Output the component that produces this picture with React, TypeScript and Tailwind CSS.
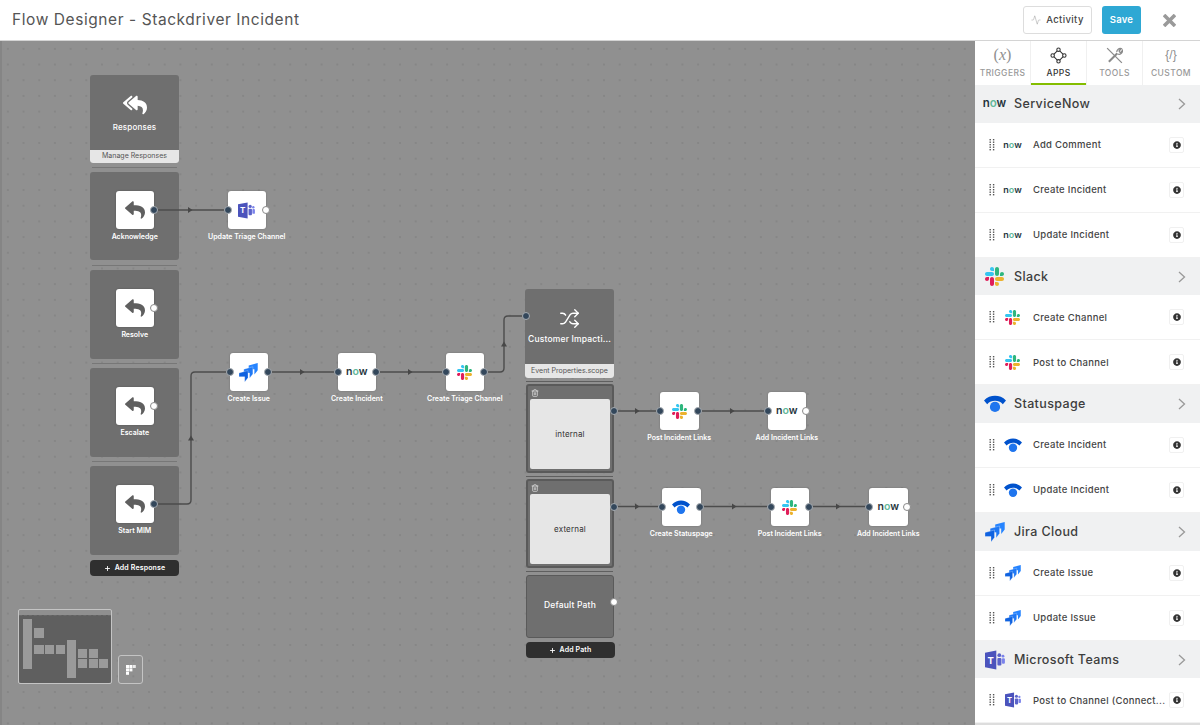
import React from "react";
import { Activity, Shuffle, Trash2, Plus } from "lucide-react";
import { FaReply, FaReplyAll, FaInfoCircle } from "react-icons/fa";

type IconKind = "now" | "slack" | "status" | "jira" | "teams";

function SlackLogo({ size }: { size: number }) {
  return (
    <svg width={size} height={size} viewBox="0 0 122.8 122.8">
      <path d="M25.8 77.6c0 7.1-5.8 12.9-12.9 12.9S0 84.7 0 77.6s5.8-12.9 12.9-12.9h12.9v12.9z" fill="#e01e5a" />
      <path d="M32.3 77.6c0-7.1 5.8-12.9 12.9-12.9s12.9 5.8 12.9 12.9v32.3c0 7.1-5.8 12.9-12.9 12.9s-12.9-5.8-12.9-12.9V77.6z" fill="#e01e5a" />
      <path d="M45.2 25.8c-7.1 0-12.9-5.8-12.9-12.9S38.1 0 45.2 0s12.9 5.8 12.9 12.9v12.9H45.2z" fill="#36c5f0" />
      <path d="M45.2 32.3c7.1 0 12.9 5.8 12.9 12.9s-5.8 12.9-12.9 12.9H12.9C5.8 58.1 0 52.3 0 45.2s5.8-12.9 12.9-12.9h32.3z" fill="#36c5f0" />
      <path d="M97 45.2c0-7.1 5.8-12.9 12.9-12.9s12.9 5.8 12.9 12.9-5.8 12.9-12.9 12.9H97V45.2z" fill="#2eb67d" />
      <path d="M90.5 45.2c0 7.1-5.8 12.9-12.9 12.9s-12.9-5.8-12.9-12.9V12.9C64.7 5.8 70.5 0 77.6 0s12.9 5.8 12.9 12.9v32.3z" fill="#2eb67d" />
      <path d="M77.6 97c7.1 0 12.9 5.8 12.9 12.9s-5.8 12.9-12.9 12.9-12.9-5.8-12.9-12.9V97h12.9z" fill="#ecb22e" />
      <path d="M77.6 90.5c-7.1 0-12.9-5.8-12.9-12.9s5.8-12.9 12.9-12.9h32.3c7.1 0 12.9 5.8 12.9 12.9s-5.8 12.9-12.9 12.9H77.6z" fill="#ecb22e" />
    </svg>
  );
}

function StatusLogo({ size }: { size: number }) {
  return (
    <svg width={size} height={size * 0.8} viewBox="0 0 25 20">
      <path d="M0 6.2C3.5 2.4 8 .8 12.5.8S21.5 2.4 25 6.2l-3.6 4.2C18.8 7.8 15.8 6.6 12.5 6.6S6.200 7.800 3.600 10.400z" fill="#0052cc" />
      <circle cx="12.5" cy="13.6" r="5.800" fill="#1f75ee" />
    </svg>
  );
}

function JiraLogo({ size }: { size: number }) {
  const shape = "M0 3 L9.500 .5 V8 L6 12.500 V7 H0 Z";
  return (
    <svg width={size} height={size} viewBox="0 0 20 20">
      <path d={shape} transform="translate(10.200 -.5)" fill="#2684ff" />
      <path d={shape} transform="translate(5.100 3.500)" fill="#1f78f4" stroke="#ffffff" strokeWidth="0.300" />
      <path d={shape} transform="translate(0 7.500)" fill="#0f62e0" stroke="#ffffff" strokeWidth="0.300" />
    </svg>
  );
}

function TeamsLogo({ size }: { size: number }) {
  return (
    <svg width={size} height={size} viewBox="0 0 20 20">
      <circle cx="14.300" cy="5.200" r="1.900" fill="#5b63c9" />
      <circle cx="18" cy="6.200" r="1.400" fill="#7b83eb" />
      <rect x="12.400" y="8" width="4" height="7.500" rx="1" fill="#5b63c9" />
      <rect x="16.900" y="8.300" width="3" height="5.500" rx="1" fill="#7b83eb" />
      <path d="M0 2.700L11.300 .6V19.400L0 17.300Z" fill="#4b53bc" />
      <text x="5.600" y="13.500" textAnchor="middle" fontSize="9.500" fontWeight="700" fill="#fff" fontFamily="Inter, sans-serif">T</text>
    </svg>
  );
}

function NowLogo({ className }: { className: string }) {
  return (
    <span className={`font-['Inter',sans-serif] font-semibold leading-none text-[#26353d] ${className}`}>
      n<span className="text-[#62b89a]">o</span>w
    </span>
  );
}

function AppIcon({ kind, size, nowClass }: { kind: IconKind; size: number; nowClass: string }) {
  if (kind === "now") return <NowLogo className={nowClass} />;
  if (kind === "slack") return <SlackLogo size={size} />;
  if (kind === "status") return <StatusLogo size={size + 3} />;
  if (kind === "jira") return <JiraLogo size={size + 1} />;
  return <TeamsLogo size={size + 1} />;
}

function Port({ x, y, open }: { x: number; y: number; open?: boolean }) {
  return (
    <span
      className={
        open
          ? "absolute z-20 h-[8px] w-[8px] -translate-x-1/2 -translate-y-1/2 rounded-full border border-[#8a8a8a] bg-white"
          : "absolute z-20 h-[8px] w-[8px] -translate-x-1/2 -translate-y-1/2 rounded-full border-[1.5px] border-[#a8adb2] bg-[#33475b]"
      }
      style={{ left: x, top: y }}
    />
  );
}

function NodeLabel({ cx, y, text }: { cx: number; y: number; text: string }) {
  return (
    <span
      className="absolute -translate-x-1/2 whitespace-nowrap text-[7px] font-semibold leading-[9px] text-white"
      style={{ left: cx, top: y }}
    >
      {text}
    </span>
  );
}

function FlowNode({ x, y, label, children }: { x: number; y: number; label: string; children: React.ReactNode }) {
  return (
    <>
      <div
        className="absolute z-10 flex h-[38px] w-[38.500px] items-center justify-center rounded-[3px] bg-white shadow-[0_0_2px_rgba(0,0,0,0.25)]"
        style={{ left: x, top: y }}
      >
        {children}
      </div>
      <NodeLabel cx={x + 19.25} y={y + 41} text={label} />
    </>
  );
}

function Panel({ y, h }: { y: number; h: number }) {
  return <div className="absolute left-[90px] w-[89px] rounded-[3px] bg-[#6f6f6f]" style={{ top: y, height: h }} />;
}

function Sep({ x, y }: { x: number; y: number }) {
  return <div className="absolute h-px w-[85px] bg-[#777777]" style={{ left: x, top: y }} />;
}

const reply = <FaReply size={20} color="#5f5f5f" />;
const nowNode = <NowLogo className="text-[10.500px]" />;
const slackNode = <SlackLogo size={15} />;
const statusNode = <StatusLogo size={18} />;

function Arrow({ x, y, up }: { x: number; y: number; up?: boolean }) {
  const pts = up ? `${x - 3},${y + 2.5} ${x + 3},${y + 2.5} ${x},${y - 2.5}` : `${x - 2},${y - 3} ${x - 2},${y + 3} ${x + 2.5},${y}`;
  return <polygon points={pts} fill="#474747" />;
}

function Edges() {
  const lines = [
    "M154 210H228",
    "M154 504H187Q191 504 191 500V376Q191 372 195 372H230",
    "M267 372H338",
    "M375 372H446",
    "M483 372H500Q504 372 504 368V320Q504 316 508 316H525",
    "M614 411H660",
    "M698 411H767",
    "M614 506.500H662",
    "M700 506.500H771",
    "M808 506.500H869",
  ];
  return (
    <svg className="absolute left-0 top-0 z-[5]" width="975" height="684" viewBox="0 41 975 684">
      {lines.map((d) => (
        <path key={d} d={d} fill="none" stroke="#4c4c4c" strokeWidth="1.400" />
      ))}
      <Arrow x={190} y={210} />
      <Arrow x={191} y={438} up />
      <Arrow x={302} y={372} />
      <Arrow x={410} y={372} />
      <Arrow x={504} y={344} up />
      <Arrow x={637} y={411} />
      <Arrow x={732} y={411} />
      <Arrow x={637} y={506.5} />
      <Arrow x={734} y={506.5} />
      <Arrow x={838} y={506.5} />
    </svg>
  );
}

function BranchFrame({ y, label }: { y: number; label: string }) {
  return (
    <div
      className="absolute left-[526px] flex h-[89px] w-[88px] flex-col rounded-[3px] border-2 border-[#5a5a5a] bg-[#6f6f6f] px-[2px] pb-[2px]"
      style={{ top: y }}
    >
      <div className="flex h-[13px] items-center pl-[1px]">
        <Trash2 size={8} color="#e8e8e8" />
      </div>
      <div className="flex flex-1 items-center justify-center rounded-[2px] bg-[#e6e6e6] text-[8px] tracking-[0.02em] text-[#333333]">
        {label}
      </div>
    </div>
  );
}

function Canvas() {
  const y0 = 41;
  const blocks: [number, number][] = [
    [368 - y0, 89],
    [466 - y0, 89],
    [172 - y0, 88],
    [270 - y0, 89],
  ];
  return (
    <div className="relative h-[684px] w-[975px] shrink-0 overflow-hidden border-l-2 border-[#858585] bg-[#909090] bg-[radial-gradient(circle,#747474_0.5px,transparent_0.8px)] bg-[length:15.7px_15.7px] bg-[position:-2px_0px]">
      <div className="absolute -left-[2px] top-0 h-[684px] w-[975px]">
        <Edges />

        <div className="absolute left-[90px] top-[34px] flex h-[88px] w-[89px] flex-col overflow-hidden rounded-[3px] bg-[#6f6f6f]">
          <div className="flex flex-1 flex-col items-center gap-[5px] pt-[18px] text-[8px] font-medium tracking-[0.02em] text-white">
            <FaReplyAll size={24} color="#ffffff" />
            <span className="leading-[10px]">Responses</span>
          </div>
          <div className="flex h-[13px] items-center justify-center bg-[#e6e6e6] text-[7px] text-[#555555]">
            Manage Responses
          </div>
        </div>
        <Sep x={92} y={126} />
        <Sep x={92} y={224} />
        <Sep x={92} y={322} />
        <Sep x={92} y={420} />

        {blocks.map(([y, h]) => (
          <Panel key={y} y={y} h={h} />
        ))}

        <FlowNode x={115.5} y={150} label="Acknowledge">{reply}</FlowNode>
        <FlowNode x={115.5} y={248} label="Resolve">{reply}</FlowNode>
        <FlowNode x={115.5} y={345.500} label="Escalate">{reply}</FlowNode>
        <FlowNode x={115.5} y={443.500} label="Start MIM">{reply}</FlowNode>
        <FlowNode x={227.5} y={150} label="Update Triage Channel"><TeamsLogo size={17} /></FlowNode>
        <FlowNode x={229.5} y={312} label="Create Issue"><JiraLogo size={19} /></FlowNode>
        <FlowNode x={337.5} y={312} label="Create Incident">{nowNode}</FlowNode>
        <FlowNode x={445.5} y={312} label="Create Triage Channel">{slackNode}</FlowNode>

        <Port x={154} y={169} />
        <Port x={228} y={169} />
        <Port x={265.5} y={169} open />
        <Port x={154} y={267} open />
        <Port x={154} y={364.500} open />
        <Port x={154} y={463} />
        <Port x={230} y={331} />
        <Port x={267.5} y={331} />
        <Port x={338} y={331} />
        <Port x={375.5} y={331} />
        <Port x={446} y={331} />
        <Port x={483.5} y={331} />

        <button className="absolute left-[90px] top-[519px] flex h-[16px] w-[89px] items-center justify-center gap-[4px] rounded-[4px] bg-[#2f2f2f] text-[7px] font-semibold tracking-[0.02em] text-white">
          <Plus size={7} strokeWidth={3} />
          Add Response
        </button>

        <div className="absolute left-[525px] top-[248px] flex h-[89px] w-[89px] flex-col overflow-hidden rounded-[3px] bg-[#6f6f6f]">
          <div className="flex flex-1 flex-col items-center gap-[5px] pt-[19px] text-[8.500px] font-medium tracking-[0.02em] text-white">
            <Shuffle size={21} strokeWidth={1.6} />
            <span className="leading-[10px]">Customer Impacti...</span>
          </div>
          <div className="flex h-[14px] items-center justify-center bg-[#e6e6e6] text-[7px] text-[#555555]">
            Event Properties.scope
          </div>
        </div>
        <Port x={525.5} y={275} />
        <div className="absolute left-[526px] top-[339.500px] h-px w-[87px] bg-[#5f5f5f]" />
        <BranchFrame y={343} label="internal" />
        <div className="absolute left-[526px] top-[434.500px] h-px w-[87px] bg-[#5f5f5f]" />
        <BranchFrame y={438} label="external" />
        <div className="absolute left-[526px] top-[530px] h-px w-[87px] bg-[#5f5f5f]" />
        <div className="absolute left-[526px] top-[534px] flex h-[63px] w-[88px] items-center justify-center rounded-[3px] border border-[#5a5a5a] bg-[#6f6f6f] pb-[3px] text-[8.500px] font-medium tracking-[0.02em] text-white">
          Default Path
        </div>
        <button className="absolute left-[525.500px] top-[601px] flex h-[16px] w-[89px] items-center justify-center gap-[4px] rounded-[4px] bg-[#2f2f2f] text-[7px] font-semibold tracking-[0.02em] text-white">
          <Plus size={7} strokeWidth={3} />
          Add Path
        </button>
        <Port x={614} y={370} />
        <Port x={614} y={465.500} />
        <Port x={614} y={561} open />

        <FlowNode x={660} y={351} label="Post Incident Links">{slackNode}</FlowNode>
        <FlowNode x={767.5} y={351} label="Add Incident Links">{nowNode}</FlowNode>
        <FlowNode x={662} y={447} label="Create Statuspage">{statusNode}</FlowNode>
        <FlowNode x={770.5} y={447} label="Post Incident Links">{slackNode}</FlowNode>
        <FlowNode x={869} y={447} label="Add Incident Links">{nowNode}</FlowNode>
        <Port x={660} y={370} />
        <Port x={698} y={370} />
        <Port x={767.5} y={370} />
        <Port x={805.5} y={370} open />
        <Port x={662} y={465.500} />
        <Port x={699.5} y={465.500} />
        <Port x={771} y={465.500} />
        <Port x={808.5} y={465.500} />
        <Port x={869} y={465.500} />
        <Port x={906.5} y={465.500} open />

        <div className="absolute left-[18px] top-[568px] h-[75px] w-[94px] rounded-[2px] border border-[#c4c4c4] bg-[#8f8f8f]">
          <div className="absolute inset-x-0 bottom-0 top-[5px] rounded-b-[2px] border-t border-dashed border-[#6a6a6a] bg-[#5f5f5f]" />
          {[
            [4, 9, 9, 50],
            [15, 18, 10, 10],
            [15, 35, 10, 9],
            [26, 35, 9, 9],
            [37, 35, 9, 9],
            [48, 30, 9, 38],
            [59, 39, 9, 9],
            [70, 39, 9, 9],
            [59, 49, 9, 9],
            [70, 49, 9, 9],
            [80, 49, 9, 9],
          ].map(([x, y, w, h]) => (
            <div key={`${x}-${y}`} className="absolute bg-[#9a9a9a]" style={{ left: x, top: y, width: w, height: h }} />
          ))}
        </div>
        <button className="absolute left-[118px] top-[614px] flex h-[29px] w-[25px] items-center justify-center rounded-[3px] border border-[#c4c4c4]">
          <svg width="10" height="10" viewBox="0 0 10 10" fill="#ffffff">
            <rect x="0" y="0" width="3" height="3" />
            <rect x="3.400" y="0" width="3" height="3" />
            <rect x="6.800" y="0" width="3" height="3" opacity="0.8" />
            <rect x="0" y="3.400" width="3" height="3" />
            <rect x="3.400" y="3.400" width="3" height="3" />
            <rect x="0" y="6.800" width="3" height="3" />
          </svg>
        </button>
      </div>
    </div>
  );
}

function Handle() {
  const dots = [0, 2.5, 5, 7.5, 10];
  return (
    <svg width="6" height="12" viewBox="0 0 6 12" fill="#555555">
      {dots.map((y) => (
        <g key={y}>
          <rect x="0.500" y={y} width="1.400" height="1.400" />
          <rect x="3.900" y={y} width="1.400" height="1.400" />
        </g>
      ))}
    </svg>
  );
}

function Row({ kind, text }: { kind: IconKind; text: string }) {
  return (
    <div className="flex h-[45px] items-center border-b border-[#f1f1f1] bg-white">
      <div className="ml-[14px] flex w-[6px] justify-center">
        <Handle />
      </div>
      <div className="ml-[8px] flex w-[25px] items-center justify-center pr-[6px]">
        <AppIcon kind={kind} size={15} nowClass="text-[9px]" />
      </div>
      <span className="ml-[5px] w-[130px] whitespace-nowrap pt-[1px] text-[9.500px] font-medium tracking-[0.03em] text-[#444444]">{text}</span>
      <span className="ml-[6px] flex h-[16px] w-[15px] items-center justify-center rounded-[2px] border border-[#f0f0f0]">
        <FaInfoCircle size={8} color="#333333" />
      </span>
    </div>
  );
}

function SectionHeader({ kind, text }: { kind: IconKind; text: string }) {
  return (
    <div className="flex h-[37.700px] items-center bg-[#f0f1f2]">
      <div className="flex w-[39px] items-center justify-center">
        <AppIcon kind={kind} size={19} nowClass="text-[11.500px]" />
      </div>
      <span className="pt-[1px] text-[12.500px] font-medium tracking-[0.03em] text-[#3d3d3d]">{text}</span>
      <svg className="ml-auto mr-[14px]" width="8" height="12" viewBox="0 0 8 12" fill="none" stroke="#999999" strokeWidth="1.300">
        <polyline points="1,1 6.500,6 1,11" />
      </svg>
    </div>
  );
}

function Tab({ label, active, children }: { label: string; active?: boolean; children: React.ReactNode }) {
  return (
    <div
      className={
        active
          ? "relative flex h-[44px] w-[56px] flex-col items-center pt-[3px] text-[#333333]"
          : "relative flex h-[44px] w-[56px] flex-col items-center pt-[3px] text-[#999999]"
      }
    >
      <div className="flex h-[22px] items-center justify-center">{children}</div>
      <span className="mt-[2px] text-[8.500px] font-medium leading-[11px] tracking-[0.05em]">{label}</span>
      {active && <span className="absolute inset-x-0 bottom-0 h-[2px] bg-[#84bd00]" />}
    </div>
  );
}

function Sidebar() {
  return (
    <aside className="flex h-[684px] w-[225px] shrink-0 flex-col overflow-hidden bg-[#dddddd]">
      <div className="flex h-[44px] shrink-0 divide-x divide-[#f0f0f0] bg-white">
        <Tab label="TRIGGERS">
          <span className="font-['Liberation_Serif',serif] text-[16px] leading-none text-[#8f8f8f]">
            (<i>x</i>)
          </span>
        </Tab>
        <Tab label="APPS" active>
          <svg width="17" height="17" viewBox="0 0 16 16" fill="#fff" stroke="#333333" strokeWidth="1">
            <path d="M8 2.500L2.500 8L8 13.500L13.500 8Z" fill="none" />
            <circle cx="8" cy="2.500" r="1.600" />
            <circle cx="2.500" cy="8" r="1.600" />
            <circle cx="13.500" cy="8" r="1.600" />
            <circle cx="8" cy="13.500" r="1.600" />
          </svg>
        </Tab>
        <Tab label="TOOLS">
          <svg width="17" height="17" viewBox="0 0 15 15" fill="none" stroke="#8a8a8a" strokeWidth="1.100">
            <path d="M1 1L14 14" />
            <path d="M2.500 13L10 5.500" strokeWidth="1.800" />
            <path d="M9.500 4.500C9.500 2.500 11.500 .8 13.500 1.500L11.500 3.500L12 4.500L13 5L14.500 3C14.800 5.300 12.500 7 10.500 6.200" />
          </svg>
        </Tab>
        <Tab label="CUSTOM">
          <span className="font-['Liberation_Sans',sans-serif] text-[12px] leading-none text-[#8f8f8f]">{"{/}"}</span>
        </Tab>
      </div>
      <SectionHeader kind="now" text="ServiceNow" />
      <Row kind="now" text="Add Comment" />
      <Row kind="now" text="Create Incident" />
      <Row kind="now" text="Update Incident" />
      <SectionHeader kind="slack" text="Slack" />
      <Row kind="slack" text="Create Channel" />
      <Row kind="slack" text="Post to Channel" />
      <SectionHeader kind="status" text="Statuspage" />
      <Row kind="status" text="Create Incident" />
      <Row kind="status" text="Update Incident" />
      <SectionHeader kind="jira" text="Jira Cloud" />
      <Row kind="jira" text="Create Issue" />
      <Row kind="jira" text="Update Issue" />
      <SectionHeader kind="teams" text="Microsoft Teams" />
      <Row kind="teams" text="Post to Channel (Connect..." />
    </aside>
  );
}

export default function App() {
  return (
    <div className="flex h-[725px] w-[1200px] flex-col overflow-hidden bg-white font-['Inter','Liberation_Sans',sans-serif]">
      <header className="flex h-[41px] shrink-0 items-center border-b border-[#d4d4d4] bg-white pl-[12px]">
        <h1 className="text-[15.500px] font-normal tracking-[0.037em] text-[#555555]">Flow Designer - Stackdriver Incident</h1>
        <div className="ml-auto flex items-center">
          <button className="flex h-[28px] w-[69px] items-center justify-center gap-[5px] rounded-[3px] border border-[#dddddd] text-[9.500px] font-medium tracking-[0.04em] text-[#444444]">
            <Activity size={10} strokeWidth={1.2} color="#999999" />
            Activity
          </button>
          <button className="ml-[10px] h-[28px] w-[39px] rounded-[3px] bg-[#2ea8d4] text-[9.500px] font-semibold tracking-[0.02em] text-white">Save</button>
          <svg className="ml-[22px] mr-[24px]" width="13" height="13" viewBox="0 0 13 13" stroke="#9a9a9a" strokeWidth="3.600">
            <path d="M1 1L12 12M12 1L1 12" />
          </svg>
        </div>
      </header>
      <main className="flex h-[684px]">
        <Canvas />
        <Sidebar />
      </main>
    </div>
  );
}
